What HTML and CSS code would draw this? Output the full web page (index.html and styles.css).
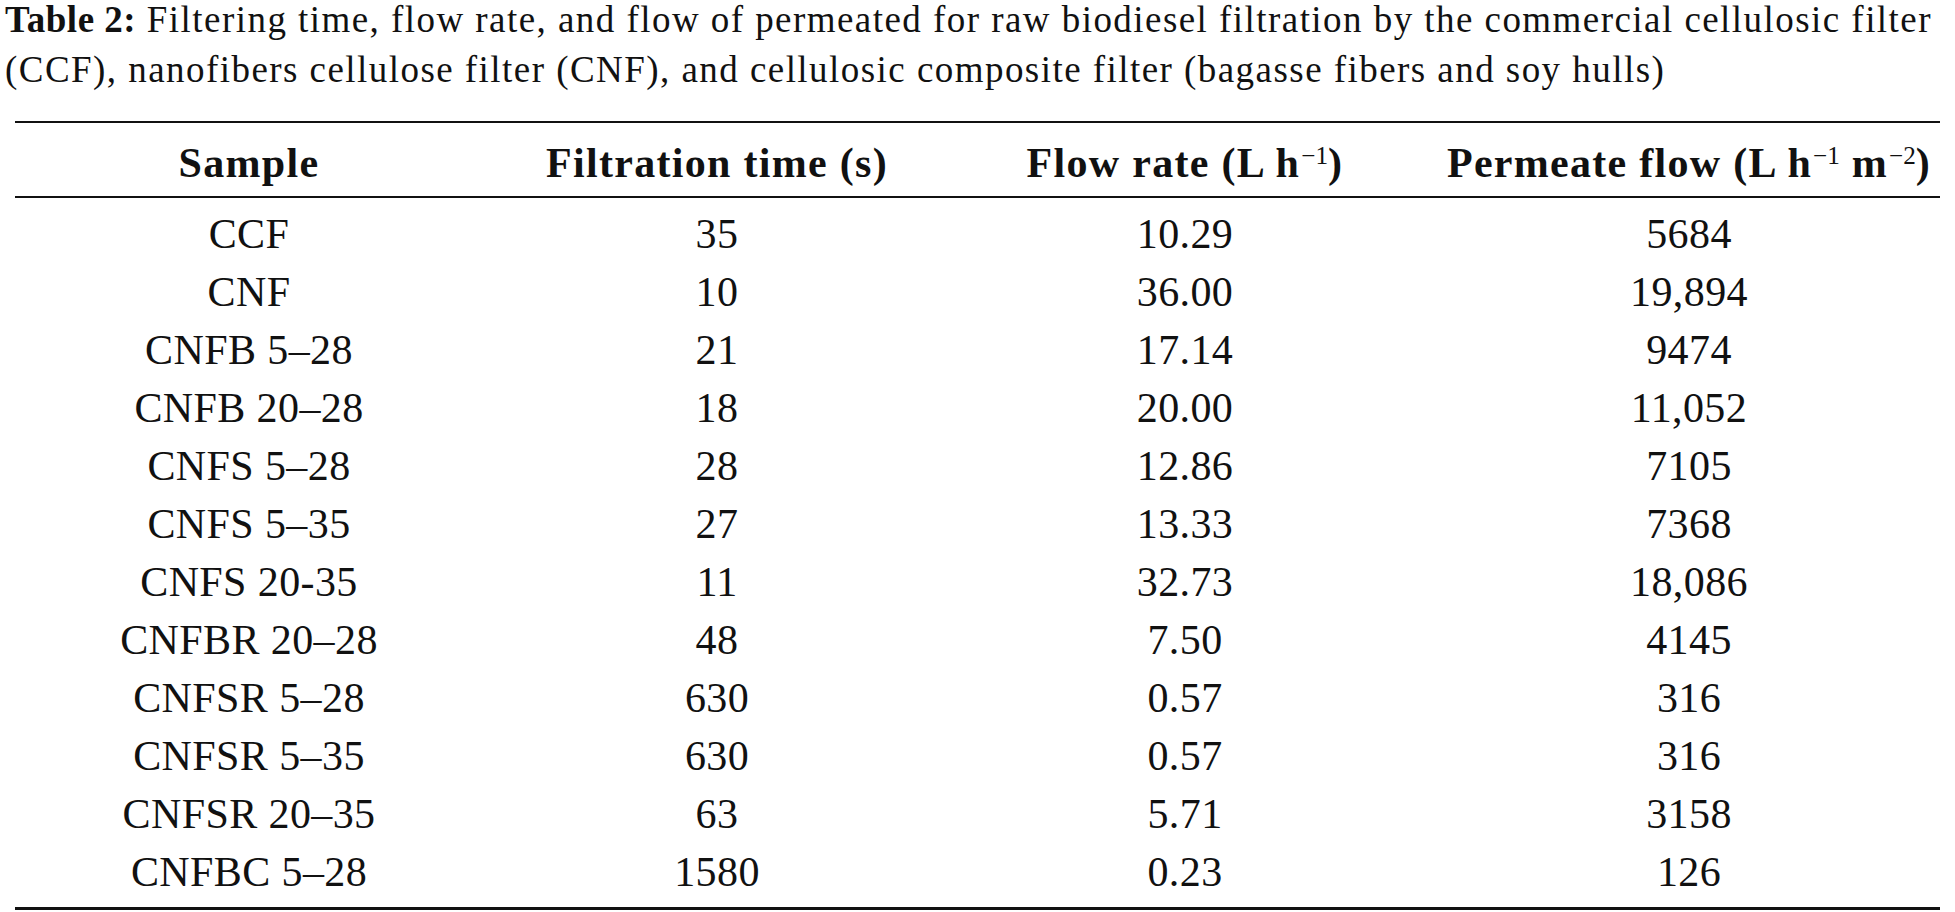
FILE: index.html
```html
<!DOCTYPE html>
<html>
<head>
<meta charset="utf-8">
<link rel="stylesheet" href="styles.css">
</head>
<body>
<div class="page">
  <p class="caption"><b>Table 2:</b> Filtering time, flow rate, and flow of permeated for raw biodiesel filtration by the commercial cellulosic filter (CCF), nanofibers cellulose filter (CNF), and cellulosic composite filter (bagasse fibers and soy hulls)</p>
  <table class="data">
    <colgroup>
      <col class="c1"><col class="c2"><col class="c3"><col class="c4">
    </colgroup>
    <thead>
      <tr>
        <th>Sample</th>
        <th>Filtration time (s)</th>
        <th>Flow rate (L h<sup>−1</sup>)</th>
        <th class="last">Permeate flow (L h<sup>−1</sup> m<sup>−2</sup>)</th>
      </tr>
    </thead>
    <tbody>
      <tr><td>CCF</td><td>35</td><td>10.29</td><td class="last">5684</td></tr>
      <tr><td>CNF</td><td>10</td><td>36.00</td><td class="last">19,894</td></tr>
      <tr><td>CNFB 5–28</td><td>21</td><td>17.14</td><td class="last">9474</td></tr>
      <tr><td>CNFB 20–28</td><td>18</td><td>20.00</td><td class="last">11,052</td></tr>
      <tr><td>CNFS 5–28</td><td>28</td><td>12.86</td><td class="last">7105</td></tr>
      <tr><td>CNFS 5–35</td><td>27</td><td>13.33</td><td class="last">7368</td></tr>
      <tr><td>CNFS 20-35</td><td>11</td><td>32.73</td><td class="last">18,086</td></tr>
      <tr><td>CNFBR 20–28</td><td>48</td><td>7.50</td><td class="last">4145</td></tr>
      <tr><td>CNFSR 5–28</td><td>630</td><td>0.57</td><td class="last">316</td></tr>
      <tr><td>CNFSR 5–35</td><td>630</td><td>0.57</td><td class="last">316</td></tr>
      <tr><td>CNFSR 20–35</td><td>63</td><td>5.71</td><td class="last">3158</td></tr>
      <tr><td>CNFBC 5–28</td><td>1580</td><td>0.23</td><td class="last">126</td></tr>
    </tbody>
  </table>
</div>
</body>
</html>
```

FILE: styles.css
```css
html, body {
  margin: 0;
  padding: 0;
  background: #ffffff;
}

body {
  font-family: "Liberation Serif", "Times New Roman", serif;
  color: #111111;
}

.page {
  width: 1955px;
  padding-top: 1px;
}

.caption {
  margin: -6px 0 0 0;
  padding-left: 5px;
  width: 1950px;
  font-size: 37px;
  line-height: 50px;
  letter-spacing: 1.45px;
}

.caption b {
  font-weight: bold;
  letter-spacing: 0.5px;
}

.data {
  margin: 26px 0 0 15px;
  width: 1925px;
  table-layout: fixed;
  border-collapse: separate;
  border-spacing: 0;
  border-top: 2px solid #111;
  border-bottom: 3px solid #111;
  font-size: 42px;
}

.c1, .c2, .c3 { width: 468px; }
.c4 { width: 521px; }

.data th,
.data td {
  padding: 0;
  text-align: center;
  line-height: 58px;
  white-space: nowrap;
}

.data td {
  letter-spacing: 0.4px;
}

.data th {
  font-weight: bold;
  letter-spacing: 1.3px;
  padding-top: 10.7px;
  padding-bottom: 4.3px;
  border-bottom: 2px solid #111;
}

.data th.last,
.data td.last {
  padding-left: 19px;
}

.data sup {
  font-weight: normal;
  font-size: 0.6em;
  line-height: 0;
  vertical-align: 0.5em;
  letter-spacing: 0;
  padding-left: 1px;
}

.data tbody tr:first-child td {
  padding-top: 6.8px;
}

.data tbody tr:last-child td {
  padding-bottom: 6px;
}
```
